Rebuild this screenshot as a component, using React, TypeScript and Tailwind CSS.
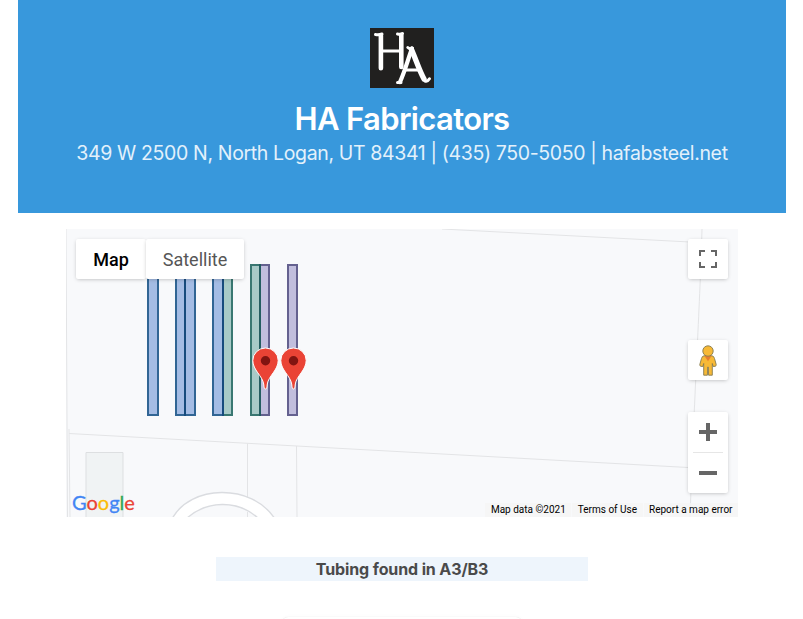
const sans = "font-['Inter','Liberation_Sans',sans-serif]";
const roboto = "font-['Roboto','Liberation_Sans',sans-serif]";

function BrandMark() {
  return (
    <svg className="h-[60px] w-16" viewBox="0 0 64 60" role="img" aria-label="HA logo">
      <rect width="64" height="60" fill="#21201f" />
      <g fill="none" stroke="#fff" strokeLinecap="round" strokeLinejoin="round">
        <path strokeWidth="4.6" d="M10.900 7.500V40.200M31.300 7V39" />
        <path strokeWidth="3" d="M5.500 6.600Q9 7.200 12 6M27.500 6Q31 6.600 32.500 5.500M12 23H31" />
        <path strokeWidth="4.2" d="M42 20.500C38 31 35 43 30 54" />
        <path strokeWidth="5.4" d="M41.700 22C46.500 33 49.500 43 54 51" />
        <path strokeWidth="3" d="M37.800 19.500Q40 21.500 42 20M27.500 54.500H31M55 53Q57.500 54 59.500 50.800M36 42H50" />
      </g>
    </svg>
  );
}

type Column = { x: number; w: number; fill: string; stroke: string };
const blue = { fill: '#a4bce4', stroke: '#316594' };
const green = { fill: '#a8cac7', stroke: '#397771' };
const purple = { fill: '#c1bedd', stroke: '#64618f' };
const columns: Column[] = [
  { x: 82, w: 10, ...blue },
  { x: 110, w: 9, ...blue },
  { x: 119, w: 10, ...blue },
  { x: 147, w: 10, ...blue },
  { x: 157, w: 9, ...green },
  { x: 185, w: 9, ...green },
  { x: 194, w: 9, ...purple },
  { x: 222, w: 9, ...purple },
];

function Marker({ x, y }: { x: number; y: number }) {
  return (
    <g transform={`translate(${x} ${y})`}>
      <path
        d="M0 41C-1.3 41-1.4 39.5-1.8 36C-3 28-12.7 22-12.7 12.5A12.7 12.5 0 0 1 12.7 12.5C12.7 22 3 28 1.8 36C1.4 39.5 1.3 41 0 41Z"
        fill="#ea4335"
        stroke="#fff"
        strokeWidth="1"
      />
      <circle cy="12.8" r="4.7" fill="#811411" />
    </g>
  );
}

function MapCanvas() {
  return (
    <svg className="block h-[288px] w-[672px]" viewBox="0 0 672 288">
      <rect width="672" height="288" fill="#f8f9fb" />
      <path d="M20 288V223.500H57V288" fill="#f0f3f4" stroke="#dddfe1" />
      <g fill="none" stroke="#e3e4e6">
        <path d="M0 0L1.500 288M3 200L4 288M3 204.500L622 238.500" />
        <path d="M376 0L624 13M636 0C634 75 629 150 624 288M181.500 214.500V288M230.500 217L231 288" />
      </g>
      <path d="M106 290C124 255.500 186 254 209 290Z" fill="#fff" stroke="#dadce0" strokeWidth="1.400" />
      <path d="M120 290C140 271.500 172 270 193 290Z" fill="#f8f9fb" stroke="#dadce0" strokeWidth="1.400" />
      <path d="M181.500 283V288" stroke="#e3e4e6" />
      {columns.map((c) => (
        <rect key={c.x} x={c.x} y="36" width={c.w} height="150" fill={c.fill} stroke={c.stroke} strokeWidth="2" />
      ))}
      <g strokeWidth="2">
        <path d="M119 35V187M157 35V187" stroke="#174b7d" />
        <path d="M194 35V187" stroke="#245d60" />
      </g>
      <Marker x={199.5} y={119} />
      <Marker x={227.5} y={119} />
    </svg>
  );
}

const card = 'rounded-[2px] bg-white shadow-[0_1px_4px_-1px_rgba(0,0,0,0.3)]';

function MapControls() {
  return (
    <div className="absolute top-[10px] right-[10px] flex w-10 flex-col">
      <button className={`${card} flex h-10 items-center justify-center`} aria-label="Toggle fullscreen">
        <svg className="size-[18px]" viewBox="0 0 18 18" fill="none" stroke="#666" strokeWidth="2">
          <path d="M1 6V1H6M12 1H17V6M17 12V17H12M6 17H1V12" />
        </svg>
      </button>
      <button className={`${card} mt-[61px] flex h-10 items-center justify-center`} aria-label="Street View">
        <svg className="h-[31px] w-[18px]" viewBox="0 0 18 31" stroke="#857a50" strokeWidth=".9">
          <path d="M5 10.800Q3.100 11 2.500 13.500L.8 19.500Q.6 21 1.800 21.300L3.800 21.500L4.700 18.500V30.200H8.400L8.700 22H9.300L9.600 30.200H13.300V18.500L14.200 21.500L16.200 21.300Q17.400 21 17.200 19.500L15.500 13.500Q14.900 11 13 10.800Z" fill="#f7b936" />
          <path d="M5.500 11H12.500L9 16.200Z" fill="#e77d2f" stroke="none" />
          <circle cx="9" cy="6" r="5.200" fill="#f7b936" />
        </svg>
      </button>
      <div className={`${card} mt-8 flex h-[81px] flex-col items-center`}>
        <button className="flex h-10 w-full items-center justify-center" aria-label="Zoom in">
          <svg className="size-[18px]" viewBox="0 0 18 18" fill="#666"><path d="M7 0H11V7H18V11H11V18H7V11H0V7H7Z" /></svg>
        </button>
        <div className="h-px w-[30px] bg-[#e6e6e6]" />
        <button className="flex h-10 w-full items-center justify-center" aria-label="Zoom out">
          <svg className="size-[18px]" viewBox="0 0 18 18" fill="#666"><path d="M0 7H18V11H0Z" /></svg>
        </button>
      </div>
    </div>
  );
}

export default function App() {
  return (
    <div className={`${sans} h-[619px] overflow-hidden bg-white pr-[17px] pl-[18px]`}>
      <header className="flex h-[213px] flex-col items-center bg-[#3898dc] pt-7 whitespace-nowrap">
        <BrandMark />
        <h1 className="mt-[13px] text-[31px] leading-9 font-semibold tracking-[-0.65px] text-white">HA Fabricators</h1>
        <p className="mt-[2px] text-[19.5px] leading-7 tracking-[-0.36px] text-[#e3f1fb]">
          349 W 2500 N, North Logan, UT 84341 | (435) 750-5050 | hafabsteel.net
        </p>
      </header>
      <main className="flex flex-col items-center pt-4">
        <section className={`${roboto} relative h-[288px] w-[672px] overflow-hidden`}>
          <MapCanvas />
          <div className="absolute top-[10px] left-[10px] flex h-10 text-lg">
            <button className={`${card} w-[70px] pt-0.5 font-medium text-black`}>Map</button>
            <button className={`${card} w-[98px] pt-0.5 text-[#565656]`}>Satellite</button>
          </div>
          <MapControls />
          <div className="absolute bottom-[2px] left-[6px] font-['Lato',sans-serif] text-[20px] leading-[26px] [-webkit-text-stroke:0.3px_currentColor]" aria-label="Google">
            <span className="text-[#4285f4]">G</span><span className="text-[#ea4335]">o</span><span className="text-[#fbbc04]">o</span><span className="text-[#4285f4]">g</span><span className="text-[#34a853]">l</span><span className="text-[#ea4335]">e</span>
          </div>
          <div className="absolute right-0 bottom-0 flex h-[14px] gap-px text-[10px] leading-[14px] whitespace-nowrap text-black">
            <span className="bg-[#f5f5f5]/80 px-[5.5px]">Map data ©2021</span>
            <span className="bg-[#f5f5f5]/80 px-[5.5px]">Terms of Use</span>
            <span className="bg-[#f5f5f5]/80 px-[5.5px]">Report a map error</span>
          </div>
        </section>
        <p className="mt-10 h-6 w-[372px] bg-[#eef5fc] text-center text-base leading-6 font-bold tracking-[-0.12px] text-[#4a4a4a]">Tubing found in A3/B3</p>
        <div className="mt-9 h-12 w-[240px] rounded-md shadow-[0_0_1px_rgba(0,0,0,0.15),0_2px_8px_rgba(0,0,0,0.03)]" />
      </main>
    </div>
  );
}
